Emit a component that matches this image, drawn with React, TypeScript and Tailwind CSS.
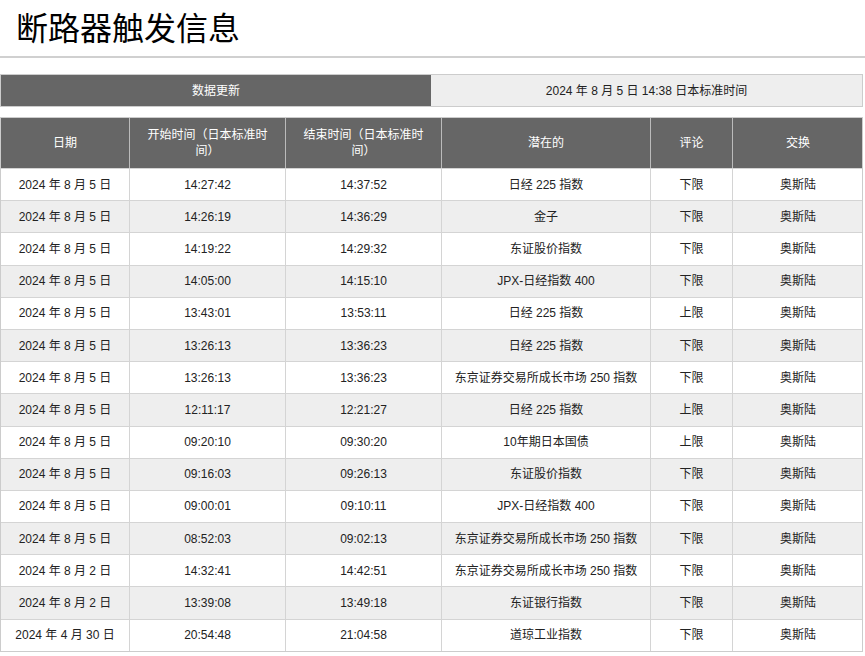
const rows: string[][] = [
  ["2024 年 8 月 5 日","14:27:42","14:37:52","日经 225 指数","下限"],
  ["2024 年 8 月 5 日","14:26:19","14:36:29","金子","下限"],
  ["2024 年 8 月 5 日","14:19:22","14:29:32","东证股价指数","下限"],
  ["2024 年 8 月 5 日","14:05:00","14:15:10","JPX-日经指数 400","下限"],
  ["2024 年 8 月 5 日","13:43:01","13:53:11","日经 225 指数","上限"],
  ["2024 年 8 月 5 日","13:26:13","13:36:23","日经 225 指数","下限"],
  ["2024 年 8 月 5 日","13:26:13","13:36:23","东京证券交易所成长市场 250 指数","下限"],
  ["2024 年 8 月 5 日","12:11:17","12:21:27","日经 225 指数","上限"],
  ["2024 年 8 月 5 日","09:20:10","09:30:20","10年期日本国债","上限"],
  ["2024 年 8 月 5 日","09:16:03","09:26:13","东证股价指数","下限"],
  ["2024 年 8 月 5 日","09:00:01","09:10:11","JPX-日经指数 400","下限"],
  ["2024 年 8 月 5 日","08:52:03","09:02:13","东京证券交易所成长市场 250 指数","下限"],
  ["2024 年 8 月 2 日","14:32:41","14:42:51","东京证券交易所成长市场 250 指数","下限"],
  ["2024 年 8 月 2 日","13:39:08","13:49:18","东证银行指数","下限"],
  ["2024 年 4 月 30 日","20:54:48","21:04:58","道琼工业指数","下限"],
];
const cols = "grid grid-cols-[128px_156px_156px_209px_82px_131px]";
export default function App() {
  return (
    <div className="w-[865px] bg-white text-[12px] text-[#222]" style={{ fontFamily: '"Liberation Sans","Noto Sans CJK SC",sans-serif' }}>
      <h1 className="h-[58px] pl-[16px] pt-[8px] text-[32px] leading-[42px] text-black border-b-2 border-[#d0d0d0]">断路器触发信息</h1>
      <div className="mt-[16px] flex h-[33px] w-[863px] border border-[#ccc]">
        <div className="flex w-[430px] items-center justify-center bg-[#666] text-white">数据更新</div>
        <div className="flex flex-1 items-center justify-center bg-[#eee]">2024 年 8 月 5 日 14:38 日本标准时间</div>
      </div>
      <div className="mt-[10px] w-[863px] border border-[#ccc]">
        <div className={`${cols} h-[50px] bg-[#666] text-white`}>
          {["日期","开始时间（日本标准时间）","结束时间（日本标准时间）","潜在的","评论","交换"].map((h, i) => (
            <div key={i} className={`flex items-center justify-center px-[14px] text-center leading-[16px] ${i ? "border-l border-[#bbb]" : ""}`}>{h}</div>
          ))}
        </div>
        {rows.map((r, ri) => (
          <div key={ri} className={`${cols} h-[32.2px] border-t border-[#d4d4d4] ${ri % 2 ? "bg-[#eee]" : "bg-white"}`}>
            {[...r, "奥斯陆"].map((c, i) => (
              <div key={i} className={`flex items-center justify-center whitespace-nowrap ${i ? "border-l border-[#d4d4d4]" : ""}`}>{c}</div>
            ))}
          </div>
        ))}
      </div>
    </div>
  );
}
